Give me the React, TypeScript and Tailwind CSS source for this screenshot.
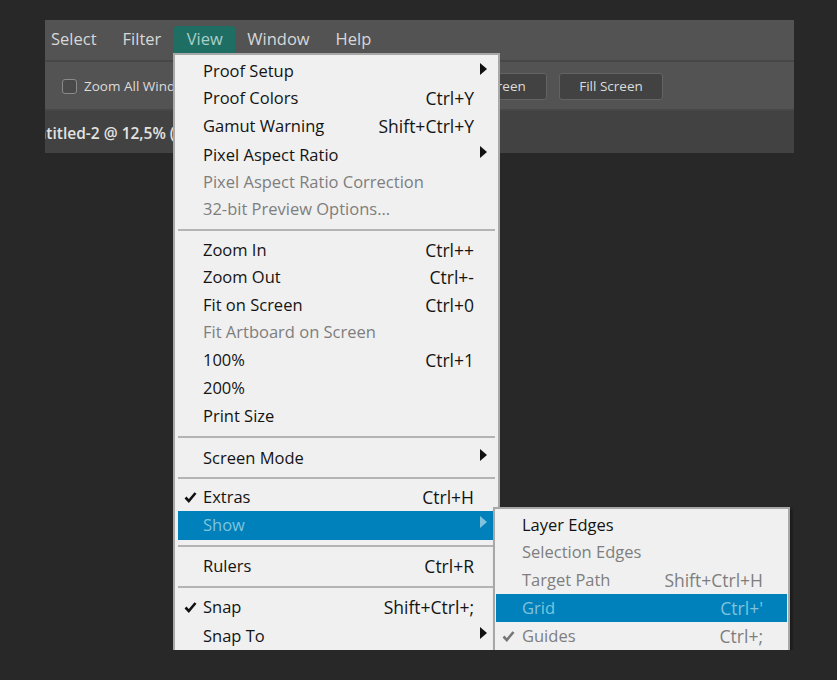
import React from 'react';

type Row = {
  label?: string;
  keys?: string;
  arrow?: boolean;
  check?: boolean;
  off?: boolean;
  active?: boolean;
  sep?: number;
  h?: number;
};

const VIEW_ROWS: Row[] = [
  { label: 'Proof Setup', arrow: true, h: 27 },
  { label: 'Proof Colors', keys: 'Ctrl+Y', h: 27 },
  { label: 'Gamut Warning', keys: 'Shift+Ctrl+Y', h: 29 },
  { label: 'Pixel Aspect Ratio', arrow: true, h: 28 },
  { label: 'Pixel Aspect Ratio Correction', off: true, h: 26 },
  { label: '32-bit Preview Options...', off: true, h: 28 },
  { sep: 14 },
  { label: 'Zoom In', keys: 'Ctrl++', h: 27 },
  { label: 'Zoom Out', keys: 'Ctrl+-', h: 27 },
  { label: 'Fit on Screen', keys: 'Ctrl+0', h: 28 },
  { label: 'Fit Artboard on Screen', off: true, h: 27 },
  { label: '100%', keys: 'Ctrl+1', h: 28 },
  { label: '200%', h: 28 },
  { label: 'Print Size', h: 28 },
  { sep: 14 },
  { label: 'Screen Mode', arrow: true, h: 28 },
  { sep: 11 },
  { label: 'Extras', keys: 'Ctrl+H', check: true, h: 28 },
  { label: 'Show', arrow: true, active: true, h: 29 },
  { sep: 12 },
  { label: 'Rulers', keys: 'Ctrl+R', h: 28 },
  { sep: 13 },
  { label: 'Snap', keys: 'Shift+Ctrl+;', check: true, h: 29 },
  { label: 'Snap To', arrow: true, h: 28 },
];

const SHOW_ROWS: Row[] = [
  { label: 'Layer Edges', h: 27 },
  { label: 'Selection Edges', off: true, h: 27 },
  { label: 'Target Path', keys: 'Shift+Ctrl+H', off: true, h: 28 },
  { label: 'Grid', keys: "Ctrl+'", off: true, active: true, h: 28 },
  { label: 'Guides', keys: 'Ctrl+;', check: true, off: true, h: 28 },
];

function Arrow({ active }: { active?: boolean }) {
  return (
    <svg width="7" height="12" viewBox="0 0 7 12" className="absolute right-[8px] top-[5px]">
      <path d="M0 0 L7 6 L0 12 Z" fill={active ? '#7fc4dc' : '#111111'} />
    </svg>
  );
}

function Check({ off }: { off?: boolean }) {
  return (
    <svg width="13" height="12" viewBox="0 0 13 12" className="absolute left-[6px] top-[8px]">
      <path d="M1.5 6.5 L4.8 10 L11.5 2" fill="none" stroke={off ? '#777777' : '#111111'} strokeWidth="2.6" />
    </svg>
  );
}

function MenuRows({ rows, labelPad, keyPad }: { rows: Row[]; labelPad: string; keyPad: string }) {
  return (
    <>
      {rows.map((row, i) => {
        if (row.sep) {
          return (
            <div key={i} className="flex items-center" style={{ height: row.sep }}>
              <div className="h-[2px] w-full bg-[#b4b4b4]" />
            </div>
          );
        }
        const color = row.active ? 'text-[#7fc4dc]' : row.off ? 'text-[#7e7e7e]' : 'text-[#141414]';
        return (
          <div
            key={i}
            className={`relative flex items-center justify-between ${row.active ? 'bg-[#0081bb]' : ''} ${color}`}
            style={{ height: row.h }}
          >
            {row.check && <Check off={row.off} />}
            <span className={labelPad}>{row.label}</span>
            {row.keys && <span className={keyPad}>{row.keys}</span>}
            {row.arrow && <Arrow active={row.active} />}
          </div>
        );
      })}
    </>
  );
}

export default function App() {
  return (
    <div
      className="h-[680px] w-[837px] bg-[#282828] pl-[45px] pt-[20px]"
      style={{ fontFamily: '"Open Sans", "Noto Sans", sans-serif' }}
    >
      <div className="relative h-[630px] w-[749px] overflow-hidden">
        {/* menu bar */}
        <div className="flex h-[42px] items-center border-b-2 border-[#474747] bg-[#535353] pb-[2px] pl-[6px] text-[16.5px] text-[#d8d8d8]">
          <span>Select</span>
          <span className="ml-[26px]">Filter</span>
          <span className="ml-[13px] mt-[6px] flex h-[27px] w-[61px] items-center justify-center self-start rounded-t-[3px] bg-[#1f6e63] text-[#a9cfc9]">
            View
          </span>
          <span className="ml-[12px]">Window</span>
          <span className="ml-[26px]">Help</span>
        </div>

        {/* options bar */}
        <div className="flex h-[49px] items-center border-b-2 border-[#474747] bg-[#535353] pt-[1px] text-[13.5px] text-[#dcdcdc]">
          <span className="ml-[17px] h-[15px] w-[15px] shrink-0 rounded-[3px] border border-[#8a8a8a] bg-[#4a4a4a]" />
          <span className="ml-[7px] w-[125px] shrink-0 whitespace-nowrap">Zoom All Windows</span>
          <span className="ml-[234px] flex h-[27px] w-[104px] shrink-0 items-center justify-center rounded-[3px] border border-[#636363] bg-[#424242]">
            Fit Screen
          </span>
          <span className="ml-[12px] flex h-[27px] w-[104px] shrink-0 items-center justify-center rounded-[3px] border border-[#636363] bg-[#424242]">
            Fill Screen
          </span>
        </div>

        {/* document tab bar */}
        <div className="flex h-[42px] items-center overflow-hidden whitespace-nowrap bg-[#424242] pt-[4px] text-[15.5px] font-semibold text-[#e2e2e2]">
          <span className="ml-[-20px]">Untitled-2 @ 12,5% (RGB/8#)</span>
        </div>

        {/* view menu */}
        <div className="absolute left-[128px] top-[33px] w-[327px] border-2 border-[#a8a8a8] bg-[#f0f0f0] pb-[6px] pl-[3px] pr-[3px] pt-[3px] text-[16.5px]">
          <MenuRows rows={VIEW_ROWS} labelPad="pl-[25px]" keyPad="pr-[21px] text-[17.5px]" />
        </div>

        {/* show submenu */}
        <div className="absolute left-[448px] top-[487px] w-[297px] border-2 border-[#a8a8a8] bg-[#f0f0f0] px-[1px] pb-[6px] pt-[3px] text-[16.5px] shadow-[2px_2px_3px_rgba(0,0,0,0.4)]">
          <MenuRows rows={SHOW_ROWS} labelPad="pl-[26px]" keyPad="pr-[24px] text-[17.5px]" />
        </div>
      </div>
    </div>
  );
}
